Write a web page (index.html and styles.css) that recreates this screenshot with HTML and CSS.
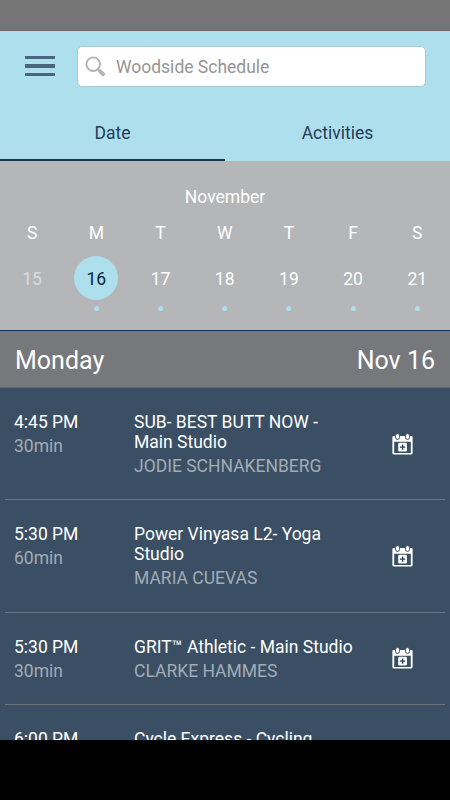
FILE: index.html
```
<!DOCTYPE html>
<html lang="en">
<head>
<meta charset="utf-8">
<title>Woodside Schedule</title>
<link rel="stylesheet" href="styles.css">
</head>
<body>
<svg class="defs" width="0" height="0">
  <symbol id="calendar-add" viewBox="0 0 22 22" overflow="visible">
    <path fill="#fff" fill-rule="evenodd" d="M1.7 2.2H20.3Q21.6 2.2 21.6 3.5V20Q21.6 21.5 20.1 21.5H1.9Q.4 21.5 .4 20V3.5Q.4 2.2 1.7 2.2ZM2.3 8V19.8H19.7V8Z"/>
    <rect x="3.7" y="-.5" width="4.2" height="6.2" rx="2.1" fill="#fff" stroke="#3a4f63" stroke-width="1"/>
    <rect x="14.1" y="-.5" width="4.2" height="6.2" rx="2.1" fill="#fff" stroke="#3a4f63" stroke-width="1"/>
    <rect x="6.5" y="9.2" width="9.2" height="9.2" rx="1.5" fill="#fff"/>
    <path d="M11.1 11V16.6M8.3 13.8H13.9" stroke="#263c58" stroke-width="1.4"/>
  </symbol>
</svg>
<div class="screen">
  <div class="status"></div>
  <header class="top">
    <div class="bar">
      <div class="menu"><i></i><i></i><i></i></div>
      <div class="search">
        <svg width="22" height="22" viewBox="0 0 22 22" fill="none" stroke="#b4b4b4"><circle cx="8.2" cy="8.2" r="6.8" stroke-width="1.9"/><path d="M12.8 13 14.5 14.7" stroke-width="2"/><path d="M14.2 14.4 19.3 19.3" stroke-width="3.8"/></svg>
        <span>Woodside Schedule</span>
      </div>
    </div>
    <nav class="tabs"><div class="tab active">Date</div><div class="tab">Activities</div></nav>
  </header>
  <section class="calendar">
    <div class="month">November</div>
    <div class="week names"><span>S</span><span>M</span><span>T</span><span>W</span><span>T</span><span>F</span><span>S</span></div>
    <div class="week days">
      <div class="day past"><b>15</b></div>
      <div class="day selected"><b>16</b><i></i></div>
      <div class="day"><b>17</b><i></i></div>
      <div class="day"><b>18</b><i></i></div>
      <div class="day"><b>19</b><i></i></div>
      <div class="day"><b>20</b><i></i></div>
      <div class="day"><b>21</b><i></i></div>
    </div>
  </section>
  <div class="heading"><span>Monday</span><span>Nov 16</span></div>
  <main class="list">
    <article class="row">
      <div class="when"><p>4:45 PM</p><p class="sub">30min</p></div>
      <div class="what"><p>SUB- BEST BUTT NOW -<br>Main Studio</p><p class="sub">JODIE SCHNAKENBERG</p></div>
      <svg class="add"><use href="#calendar-add"/></svg>
    </article>
    <article class="row">
      <div class="when"><p>5:30 PM</p><p class="sub">60min</p></div>
      <div class="what"><p>Power Vinyasa L2- Yoga<br>Studio</p><p class="sub">MARIA CUEVAS</p></div>
      <svg class="add"><use href="#calendar-add"/></svg>
    </article>
    <article class="row">
      <div class="when"><p>5:30 PM</p><p class="sub">30min</p></div>
      <div class="what"><p>GRIT™ Athletic - Main Studio</p><p class="sub">CLARKE HAMMES</p></div>
      <svg class="add"><use href="#calendar-add"/></svg>
    </article>
    <article class="row">
      <div class="when"><p>6:00 PM</p></div>
      <div class="what"><p>Cycle Express - Cycling</p></div>
    </article>
  </main>
  <div class="navbar"></div>
</div>
</body>
</html>
```
FILE: styles.css
```
* { box-sizing: border-box; }
body { margin: 0; background: #000; font-family: Roboto, sans-serif; font-size: 17.5px; }
p { margin: 0; }
.defs { display: block; }
.screen { width: 450px; height: 800px; display: flex; flex-direction: column; overflow: hidden; }
.status { height: 31px; flex: none; background: #757575; border-bottom: 1px solid #77696a; }
.top { height: 130px; flex: none; background: #addfed; display: flex; flex-direction: column; }
.bar { display: flex; align-items: flex-start; padding: 15px 24.5px 0 25px; height: 73px; }
.menu { width: 30px; margin: 10px 22px 0 0; display: flex; flex-direction: column; gap: 5px; }
.menu i { height: 3.4px; background: #4a6580; }
.search { flex: 1; height: 41px; border: 1px solid #a3cbd7; border-radius: 5px; background: #fff; display: flex; align-items: center; padding-left: 7px; gap: 9px; color: #959595; }
.tabs { flex: 1; display: flex; color: #243c59; }
.tab { flex: 1; text-align: center; line-height: 58px; height: 57px; border-bottom: 2px solid transparent; }
.tab.active { border-color: #183650; }
.calendar { height: 170px; flex: none; background: #b5b6b8; border-bottom: 1px solid #0d3352; color: #fff; padding-top: 24px; }
.month { text-align: center; line-height: 24px; }
.week { display: grid; grid-template-columns: repeat(7, 1fr); text-align: center; margin-right: .6px; }
.names { line-height: 24px; margin-top: 12px; }
.days { margin-top: 11px; }
.day { display: flex; flex-direction: column; align-items: center; }
.day b { width: 44px; height: 44px; border-radius: 50%; line-height: 46px; font-weight: 400; }
.day i { width: 5px; height: 5px; border-radius: 50%; background: #addfed; margin-top: 6px; }
.past { color: #dadadb; }
.selected b { background: #addfed; color: #0c2340; }
.heading { height: 57px; flex: none; background: #77787b; display: flex; justify-content: space-between; padding: 0 15px; line-height: 60px; font-size: 25px; color: #fff; border-bottom: 1px solid #606a73; }
.list { flex: 1; overflow: hidden; background: #3a4f63; color: #fff; padding: 0 5px; }
.row { display: flex; align-items: stretch; padding: 24px 32px 21.3px 9px; border-bottom: 1px solid #6c737a; line-height: 20px; white-space: nowrap; }
.when { width: 120px; }
.what { flex: 1; }
.sub { color: #a2acb5; line-height: 24px; padding-top: 2px; }
.add { width: 21px; height: 21px; align-self: center; margin-bottom: 2px; overflow: visible; }
.navbar { height: 60px; flex: none; background: #000; }
```
